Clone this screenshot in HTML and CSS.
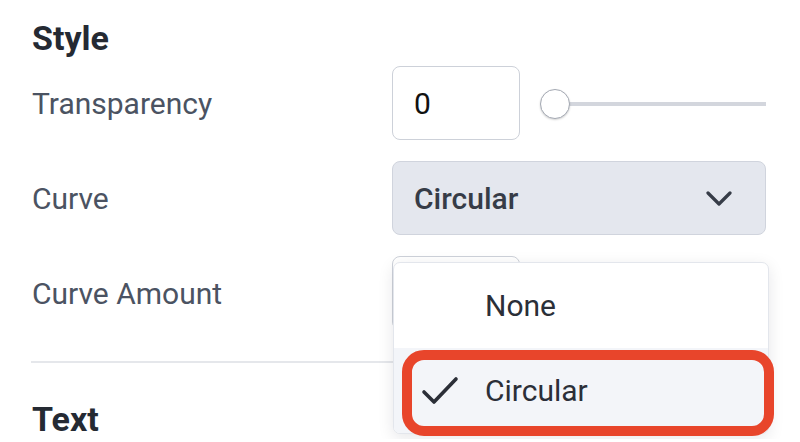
FILE: index.html
```html
<!DOCTYPE html>
<html lang="en">
<head>
<meta charset="utf-8">
<title>Style panel</title>
<link rel="stylesheet" href="styles.css">
</head>
<body>
<div class="panel">
  <h2 class="section-title">Style</h2>
  <div class="rows">
    <div class="row">
      <span class="label">Transparency</span>
      <div class="control range-control">
        <div class="num-input">0</div>
        <div class="slider"><span class="thumb"></span><span class="track"></span></div>
      </div>
    </div>
    <div class="row">
      <span class="label">Curve</span>
      <div class="control">
        <div class="select">
          <span>Circular</span>
          <svg class="chevron" width="26" height="15" viewBox="0 0 26 15" aria-hidden="true">
            <path d="M2 2 L13 13 L24 2" fill="none" stroke="#363c47" stroke-width="3.2" stroke-linecap="round" stroke-linejoin="round"/>
          </svg>
        </div>
      </div>
    </div>
    <div class="row">
      <span class="label">Curve Amount</span>
      <div class="control range-control">
        <div class="num-input"></div>
        <div class="slider"><span class="thumb"></span><span class="track"></span></div>
        <div class="menu">
          <div class="menu-item">
            <span class="check-slot"></span>
            <span>None</span>
          </div>
          <div class="menu-item selected">
            <span class="check-slot">
              <svg width="38" height="30" viewBox="0 0 38 30" aria-hidden="true">
                <path d="M3 16 L13 26 L35 3" fill="none" stroke="#2b2f38" stroke-width="3.6" stroke-linecap="round" stroke-linejoin="round"/>
              </svg>
            </span>
            <span>Circular</span>
          </div>
        </div>
        <div class="highlight"></div>
      </div>
    </div>
  </div>
  <div class="divider"></div>
  <h2 class="section-title">Text</h2>
</div>
</body>
</html>
```
FILE: styles.css
```css
html, body {
  margin: 0;
  padding: 0;
  background: #ffffff;
  overflow: hidden;
}

body {
  font-family: Roboto, "Noto Sans", "Liberation Sans", sans-serif;
  color: #252a33;
}

.panel {
  padding: 18px 34px 0 32px;
}

.section-title {
  margin: 0;
  font-size: 34px;
  line-height: 40px;
  font-weight: 700;
  color: #252a33;
}

.rows {
  margin-top: 8px;
  display: flex;
  flex-direction: column;
  gap: 21px;
}

.row {
  display: grid;
  grid-template-columns: 1fr 374px;
  align-items: center;
  height: 74px;
}

.label {
  font-size: 30px;
  color: #4b5362;
  padding-top: 1px;
}

.control {
  position: relative;
  height: 74px;
}

.range-control {
  display: flex;
  align-items: center;
}

.num-input {
  box-sizing: border-box;
  width: 128px;
  height: 74px;
  border: 1.5px solid #cdd1d9;
  border-radius: 8px;
  background: #fff;
  display: flex;
  align-items: center;
  padding-left: 21px;
  font-size: 30px;
  color: #111111;
  flex: none;
}

.slider {
  flex: 1;
  margin-left: 20px;
  display: flex;
  align-items: center;
  padding-top: 2px;
}

.thumb {
  box-sizing: border-box;
  width: 30px;
  height: 30px;
  border-radius: 50%;
  border: 1.5px solid #a4a9b3;
  background: #fff;
  box-shadow: 0 1px 2px rgba(0, 0, 0, 0.18);
  flex: none;
  position: relative;
  z-index: 1;
}

.track {
  flex: 1;
  height: 4.5px;
  background: #d3d6dd;
  margin-left: -1px;
}

.select {
  box-sizing: border-box;
  height: 74px;
  background: #e4e7ee;
  border: 1.5px solid #d0d4dd;
  border-radius: 8px;
  display: flex;
  align-items: center;
  justify-content: space-between;
  padding: 0 33px 0 21px;
  font-size: 30px;
  font-weight: 500;
  color: #363c47;
}

.chevron {
  display: block;
}

.menu {
  position: absolute;
  top: 6px;
  left: 1px;
  width: 376px;
  box-sizing: border-box;
  background: #ffffff;
  border: 1px solid #e3e6ec;
  border-radius: 7px;
  box-shadow: 0 4px 16px rgba(17, 24, 39, 0.10);
  overflow: hidden;
  z-index: 2;
}

.menu-item {
  height: 85px;
  display: flex;
  align-items: center;
  padding-left: 27px;
  font-size: 30px;
  color: #2b2f38;
}

.menu-item.selected {
  background: #f3f5f9;
}

.check-slot {
  width: 64px;
  flex: none;
  display: flex;
  align-items: center;
}

.check-slot svg {
  display: block;
  margin-top: 1px;
}

.highlight {
  position: absolute;
  left: 10px;
  top: 94px;
  width: 372px;
  height: 86px;
  box-sizing: border-box;
  border: 10px solid #e8452b;
  border-radius: 22px;
  z-index: 3;
  pointer-events: none;
}

.divider {
  margin-top: 31px;
  height: 2px;
  background: #e5e7eb;
  margin-left: -1px;
}

.divider + .section-title {
  margin-top: 36px;
}
```
